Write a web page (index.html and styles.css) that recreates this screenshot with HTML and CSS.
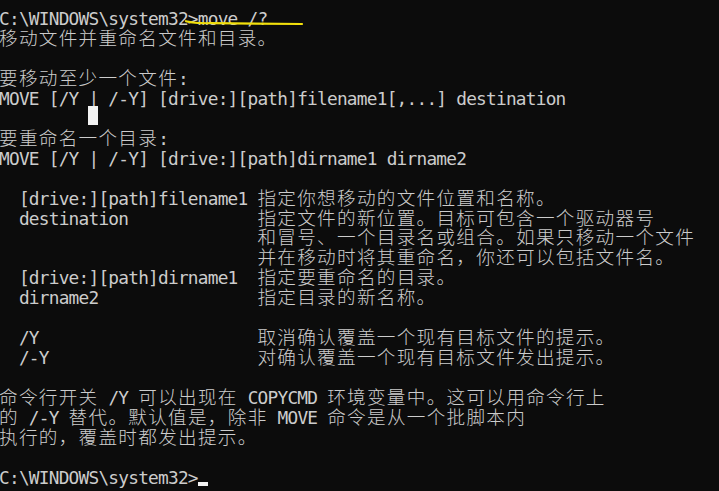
FILE: index.html
```html
<!DOCTYPE html>
<html lang="zh-CN">
<head>
<meta charset="utf-8">
<title>move /?</title>
<link rel="stylesheet" href="styles.css">
</head>
<body>
<div class="console">
<div class="ln">C:\WINDOWS\system32&gt;move /?</div>
<div class="ln"><span class="z">移动文件并重命名文件和目录。</span></div>
<div class="ln"> </div>
<div class="ln"><span class="z">要移动至少一个文件</span>:</div>
<div class="ln">MOVE [/Y | /-Y] [drive:][path]filename1[,...] destination</div>
<div class="ln">         <span class="cursor-block"></span></div>
<div class="ln"><span class="z">要重命名一个目录</span>:</div>
<div class="ln">MOVE [/Y | /-Y] [drive:][path]dirname1 dirname2</div>
<div class="ln"> </div>
<div class="ln">  [drive:][path]filename1 <span class="z">指定你想移动的文件位置和名称。</span></div>
<div class="ln">  destination             <span class="z">指定文件的新位置。目标可包含一个驱动器号</span></div>
<div class="ln">                          <span class="z">和冒号、一个目录名或组合。如果只移动一个文件</span></div>
<div class="ln">                          <span class="z">并在移动时将其重命名，你还可以包括文件名。</span></div>
<div class="ln">  [drive:][path]dirname1  <span class="z">指定要重命名的目录。</span></div>
<div class="ln">  dirname2                <span class="z">指定目录的新名称。</span></div>
<div class="ln"> </div>
<div class="ln">  /Y                      <span class="z">取消确认覆盖一个现有目标文件的提示。</span></div>
<div class="ln">  /-Y                     <span class="z">对确认覆盖一个现有目标文件发出提示。</span></div>
<div class="ln"> </div>
<div class="ln"><span class="z">命令行开关</span> /Y <span class="z">可以出现在</span> COPYCMD <span class="z">环境变量中。这可以用命令行上</span></div>
<div class="ln"><span class="z">的</span> /-Y <span class="z">替代。默认值是，除非</span> MOVE <span class="z">命令是从一个批脚本内</span></div>
<div class="ln"><span class="z">执行的，覆盖时都发出提示。</span></div>
<div class="ln"> </div>
<div class="ln">C:\WINDOWS\system32&gt;<span class="cursor-line"></span></div>
</div>
<svg class="mark" width="719" height="40" viewBox="0 0 719 40" aria-hidden="true">
  <path d="M186 21.2 C192 22.8 198 23.4 210 23.2 L302 24" fill="none" stroke="#f2e00c" stroke-width="2.2" stroke-linecap="round"/>
</svg>
</body>
</html>
```
FILE: styles.css
```css
html, body {
  margin: 0;
  padding: 0;
  background: #0c0c0c;
  width: 719px;
  height: 491px;
  overflow: hidden;
}

body {
  position: relative;
}

.console {
  padding: 9px 0 0 0;
  margin-left: -1px;
  color: #cccccc;
  font-family: "DejaVu Sans Mono", "Noto Sans CJK SC", monospace;
  font-size: 17.8px;
  letter-spacing: -0.766px;
  line-height: 19.96px;
}

.ln {
  height: 19.96px;
  white-space: pre;
}

.z {
  font-family: "Noto Sans CJK SC", sans-serif;
  font-size: 18.6px;
  font-weight: 300;
  letter-spacing: 1.3px;
  line-height: 0;
}

.cursor-block {
  display: inline-block;
  width: 10px;
  height: 19.5px;
  background: #f2f2f2;
  vertical-align: top;
  margin-top: -3px;
}

.cursor-line {
  display: inline-block;
  width: 10px;
  height: 4px;
  background: #f2f2f2;
  vertical-align: -2px;
}

.mark {
  position: absolute;
  left: 0;
  top: 0;
}
```
